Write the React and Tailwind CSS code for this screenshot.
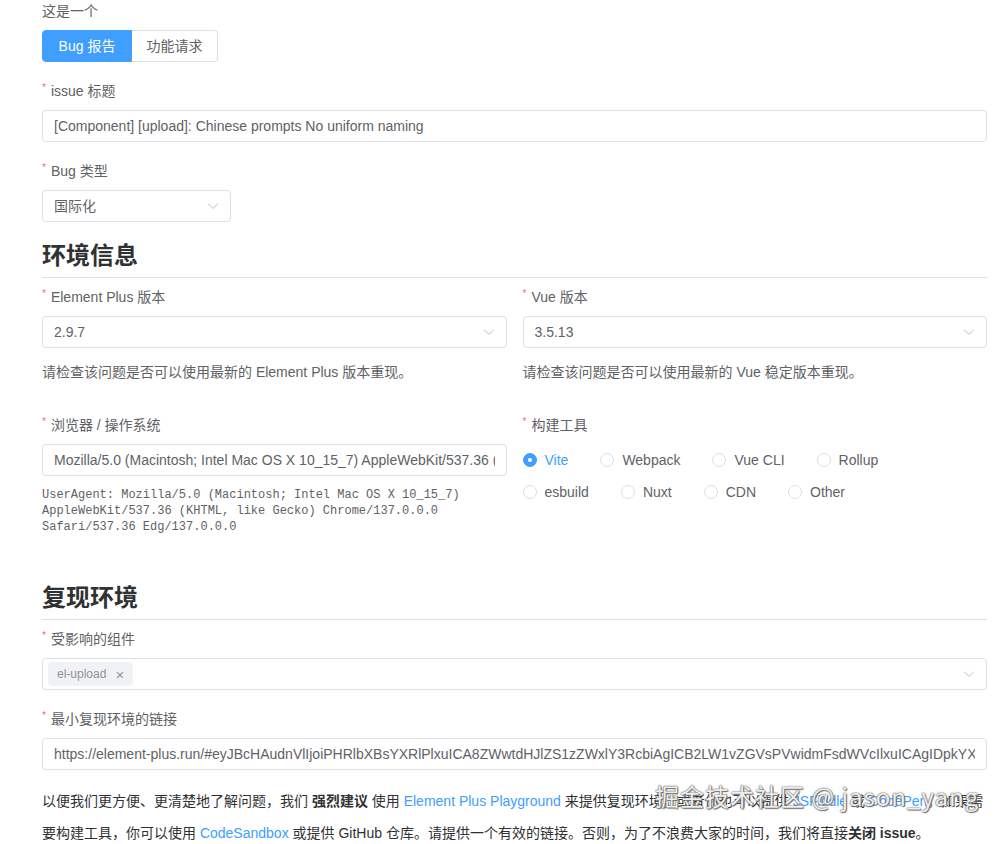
import React, { useState } from "react";

const FONT = "font-['Helvetica_Neue','Liberation_Sans','Noto_Sans_CJK_SC',sans-serif]";

const Chevron = () => (
  <svg width="12" height="12" viewBox="0 0 24 24" fill="none" stroke="#a8abb2" strokeWidth="1.6" strokeLinecap="round" strokeLinejoin="round">
    <path d="M3 8l9 9 9-9" />
  </svg>
);

const Label = ({ children, required = true }) => (
  <div className="h-[22px] leading-[22px] text-sm text-[#606266] mb-2 flex items-center">
    {required && <span className="text-[#f56c6c] text-[10px] mr-[5px] -mt-[6px]">*</span>}
    {children}
  </div>
);

const Input = ({ value }) => (
  <div className="h-8 border border-[#dcdfe6] rounded px-[11px] flex items-center text-sm text-[#606266]">
    <span className="flex-1 min-w-0 overflow-hidden whitespace-nowrap">{value}</span>
  </div>
);

const Select = ({ value, className = "" }) => (
  <div className={`h-8 border border-[#dcdfe6] rounded pl-[11px] pr-[11px] flex items-center justify-between text-sm text-[#606266] ${className}`}>
    <span>{value}</span>
    <Chevron />
  </div>
);

const Heading = ({ children }) => (
  <div className="border-b border-[#dcdfe6] pb-[5px] mb-2">
    <h2 className="h-8 leading-8 text-[24px] font-bold text-[#303133]">{children}</h2>
  </div>
);

const tools = ["Vite", "Webpack", "Vue CLI", "Rollup", "esbuild", "Nuxt", "CDN", "Other"];

export default function App() {
  const [kind, setKind] = useState("bug");
  const [tool, setTool] = useState("Vite");

  return (
    <div className={`${FONT} relative bg-white min-h-[844px] pl-[42px] pr-[14px] overflow-hidden`}>
      {/* 类型 */}
      <Label required={false}>这是一个</Label>
      <div className="flex h-8 mb-[18px]">
        <button
          onClick={() => setKind("bug")}
          className={`w-[90px] h-8 text-sm rounded-l border ${kind === "bug" ? "bg-[#409eff] border-[#409eff] text-white" : "bg-white border-[#dcdfe6] text-[#606266]"}`}
        >
          Bug 报告
        </button>
        <button
          onClick={() => setKind("feature")}
          className={`w-[86px] h-8 text-sm rounded-r border border-l-0 ${kind === "feature" ? "bg-[#409eff] border-[#409eff] text-white" : "bg-white border-[#dcdfe6] text-[#606266]"}`}
        >
          功能请求
        </button>
      </div>

      <Label>issue 标题</Label>
      <div className="mb-[18px]">
        <Input value="[Component] [upload]: Chinese prompts No uniform naming" />
      </div>

      <Label>Bug 类型</Label>
      <div className="mb-[18px]">
        <Select value="国际化" className="w-[189px]" />
      </div>

      {/* 环境信息 */}
      <Heading>环境信息</Heading>
      <div className="grid grid-cols-2 gap-x-4">
        <div className="min-w-0">
          <Label>Element Plus 版本</Label>
          <Select value="2.9.7" />
          <p className="mt-[13px] leading-[22px] text-sm text-[#606266]">请检查该问题是否可以使用最新的 Element Plus 版本重现。</p>
          <div className="mt-[31px]">
            <Label>浏览器 / 操作系统</Label>
            <Input value="Mozilla/5.0 (Macintosh; Intel Mac OS X 10_15_7) AppleWebKit/537.36 (KHTML, like Gecko) Chrome/137.0.0.0 Safari/537.36 Edg/137.0.0.0" />
            <pre className="mt-[11px] font-['Liberation_Mono',monospace] text-xs leading-4 text-[#606266] whitespace-pre-wrap">
{`UserAgent: Mozilla/5.0 (Macintosh; Intel Mac OS X 10_15_7)
AppleWebKit/537.36 (KHTML, like Gecko) Chrome/137.0.0.0
Safari/537.36 Edg/137.0.0.0`}
            </pre>
          </div>
        </div>
        <div className="min-w-0">
          <Label>Vue 版本</Label>
          <Select value="3.5.13" />
          <p className="mt-[13px] leading-[22px] text-sm text-[#606266]">请检查该问题是否可以使用最新的 Vue 稳定版本重现。</p>
          <div className="mt-[31px]">
            <Label>构建工具</Label>
            <div className="flex flex-wrap">
              {tools.map((t) => {
                const on = tool === t;
                return (
                  <label key={t} onClick={() => setTool(t)} className="h-8 flex items-center mr-8 cursor-pointer">
                    <span className={`w-[14px] h-[14px] rounded-full border flex items-center justify-center ${on ? "bg-[#409eff] border-[#409eff]" : "bg-white border-[#dcdfe6]"}`}>
                      {on && <span className="w-1 h-1 rounded-full bg-white" />}
                    </span>
                    <span className={`ml-2 text-sm ${on ? "text-[#409eff]" : "text-[#606266]"}`}>{t}</span>
                  </label>
                );
              })}
            </div>
          </div>
        </div>
      </div>

      {/* 复现环境 */}
      <div className="mt-[47px]">
        <Heading>复现环境</Heading>
      </div>
      <Label>受影响的组件</Label>
      <div className="mb-[18px] h-8 border border-[#dcdfe6] rounded pl-[5px] pr-[11px] flex items-center justify-between">
        <span className="h-6 px-[9px] rounded bg-[#f0f2f5] text-xs text-[#909399] flex items-center gap-[9px]">
          el-upload
          <span className="text-[15px] leading-none">×</span>
        </span>
        <Chevron />
      </div>

      <Label>最小复现环境的链接</Label>
      <Input value="https://element-plus.run/#eyJBcHAudnVlIjoiPHRlbXBsYXRlPlxuICA8ZWwtdHJlZS1zZWxlY3RcbiAgICB2LW1vZGVsPVwidmFsdWVcIlxuICAgIDpkYXRhPVwiZGF0YVwiXG4gICAgbXVsdGlwbGVcbiAgICA6cmVuZGVyLWFmdGVyLWV4cGFuZD1cImZhbHNlXCJcbiAgLz5cbjwvdGVtcGxhdGU+In0=" />

      <p className="mt-[15px] text-sm leading-8 text-[#303133]">
        以便我们更方便、更清楚地了解问题，我们 <b>强烈建议</b> 使用{" "}
        <span className="text-[#409eff]">Element Plus Playground</span> 来提供复现环境，或者你也可以提供{" "}
        <span className="text-[#409eff]">JSFiddle</span> 或 <span className="text-[#409eff]">CodePen</span>。如果需要构建工具，你可以使用{" "}
        <span className="text-[#409eff]">CodeSandbox</span> 或提供 GitHub 仓库。请提供一个有效的链接。否则，为了不浪费大家的时间，我们将直接<b>关闭 issue</b>。
      </p>

      {/* watermark */}
      <div className="absolute left-[655px] top-[776px] text-[24px] tracking-[1px] leading-[40px] text-white/90 font-['Noto_Sans_CJK_SC',sans-serif] whitespace-nowrap pointer-events-none [text-shadow:0_0_1px_#555,0_0_2px_#666,1px_1px_1px_#777]">
        掘金技术社区 @ jason_yang
      </div>
    </div>
  );
}
